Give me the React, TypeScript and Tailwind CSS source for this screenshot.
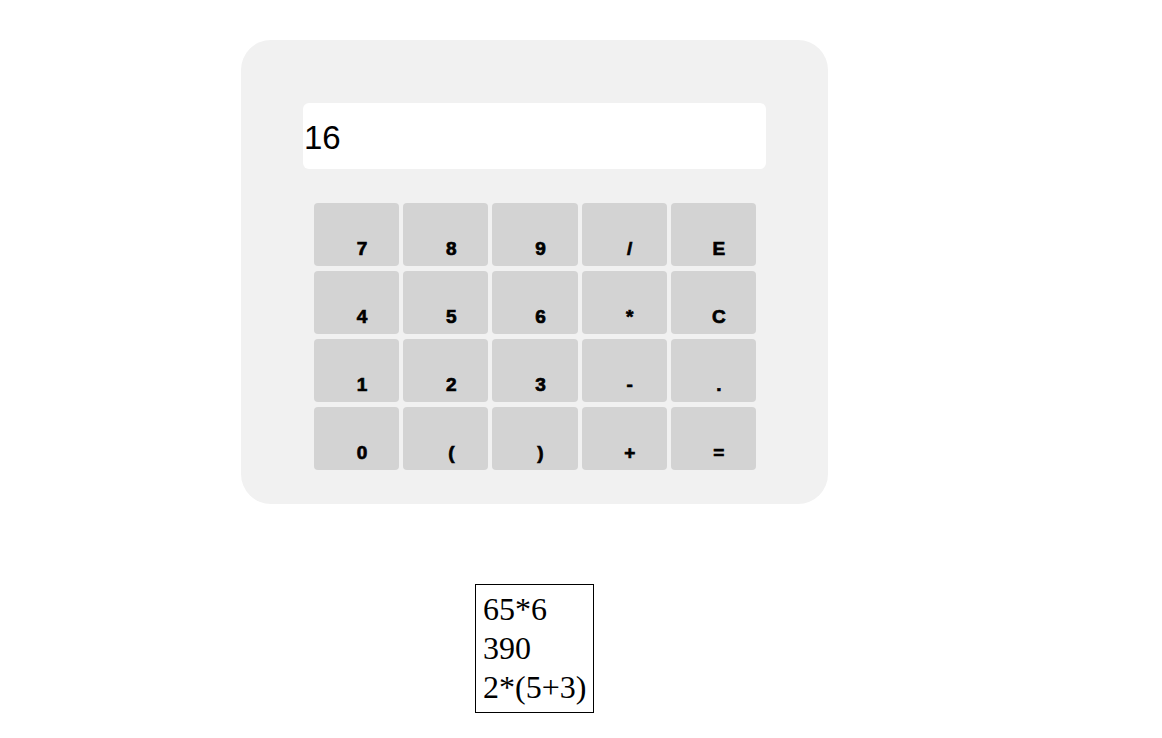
import React from 'react';

const keys: string[] = ['7', '8', '9', '/', 'E', '4', '5', '6', '*', 'C', '1', '2', '3', '-', '.', '0', '(', ')', '+', '='];

const history: string[] = ['65*6', '390', '2*(5+3)'];

const Key: React.FC<{ label: string }> = ({ label }) => (
  <button className="h-[63px] bg-[#d3d3d3] rounded-[4px] flex items-end justify-center pl-[11px] pb-[8px] text-[19px] leading-none font-bold text-black [font-family:'Liberation_Sans',Arial,sans-serif] [-webkit-text-stroke:0.7px_black]">
    {label}
  </button>
);

export default function App() {
  return (
    <div className="min-h-[738px] bg-white pt-[40px] pl-[241px]">
      <div className="w-[587px] h-[464px] rounded-[30px] bg-[#f1f1f1] pt-[63px]">
        <div className="ml-[62px] w-[463px] h-[66px] bg-white rounded-[6px] flex items-center pl-[1px] pt-[3px] text-[33px] text-black [font-family:'Liberation_Sans_Narrow','Liberation_Sans',sans-serif]">
          16
        </div>
        <div className="mt-[34px] ml-[73px] w-[442px] grid grid-cols-5 gap-x-[4px] gap-y-[5px]">
          {keys.map((k) => (
            <Key key={k} label={k} />
          ))}
        </div>
      </div>
      <div className="mt-[80px] ml-[234px] w-[119px] h-[129px] border border-black px-[7px] py-[5px] text-[32px] leading-[39px] text-black [font-family:'Liberation_Serif','Times_New_Roman',serif]">
        {history.map((h) => (
          <div key={h} className="whitespace-nowrap">{h}</div>
        ))}
      </div>
    </div>
  );
}
